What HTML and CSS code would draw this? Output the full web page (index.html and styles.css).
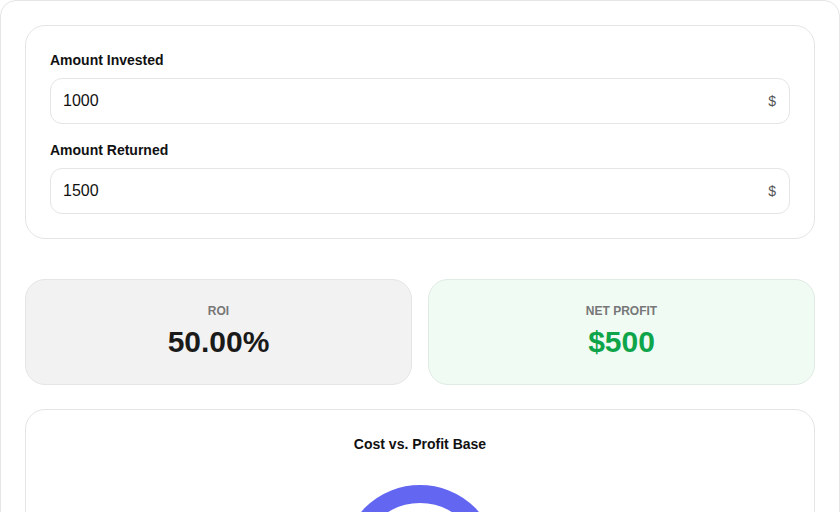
FILE: index.html
```html
<!DOCTYPE html>
<html lang="en">
<head>
<meta charset="utf-8">
<title>ROI Calculator</title>
<link rel="stylesheet" href="styles.css">
</head>
<body>
<div class="app">
  <section class="card inputs">
    <div class="field">
      <label class="label" for="inv">Amount Invested</label>
      <div class="input-wrap">
        <input id="inv" class="input" type="text" value="1000">
        <span class="suffix">$</span>
      </div>
    </div>
    <div class="field">
      <label class="label" for="ret">Amount Returned</label>
      <div class="input-wrap">
        <input id="ret" class="input" type="text" value="1500">
        <span class="suffix">$</span>
      </div>
    </div>
  </section>

  <section class="stats">
    <div class="stat stat-roi">
      <div class="stat-label">ROI</div>
      <div class="stat-value">50.00%</div>
    </div>
    <div class="stat stat-profit">
      <div class="stat-label">NET PROFIT</div>
      <div class="stat-value green">$500</div>
    </div>
  </section>

  <section class="card chart-card">
    <h3 class="chart-title">Cost vs. Profit Base</h3>
    <div class="chart">
      <svg class="donut" width="180" height="180" viewBox="0 0 180 180">
        <circle cx="90" cy="90" r="69" fill="none" stroke="#6366f1" stroke-width="18"/>
        <circle cx="90" cy="90" r="69" fill="none" stroke="#22c55e" stroke-width="18"
          stroke-dasharray="144.5 289" transform="rotate(30 90 90)"/>
      </svg>
    </div>
  </section>
</div>
</body>
</html>
```

FILE: styles.css
```css
* { box-sizing: border-box; }
html, body {
  margin: 0;
  padding: 0;
  background: #ffffff;
}
body {
  font-family: "Liberation Sans", Arial, Helvetica, sans-serif;
  color: #111111;
}
.app {
  border: 1px solid #e5e5e5;
  border-radius: 16px;
  padding: 24px;
  display: flex;
  flex-direction: column;
  background: #ffffff;
  min-height: 700px;
}
.card {
  border: 1px solid #e5e5e5;
  border-radius: 20px;
  padding: 24px;
  background: #ffffff;
}
.inputs {
  display: flex;
  flex-direction: column;
  gap: 16px;
}
.field {
  display: flex;
  flex-direction: column;
  gap: 8px;
}
.label {
  font-size: 14px;
  font-weight: 700;
  line-height: 20px;
  color: #111111;
}
.input-wrap {
  display: flex;
  align-items: center;
  height: 46px;
  border: 1px solid #e5e5e5;
  border-radius: 12px;
  padding: 0 12px;
  background: #ffffff;
}
.input {
  flex: 1;
  border: 0;
  outline: none;
  background: transparent;
  font-family: "Liberation Sans", Arial, Helvetica, sans-serif;
  font-size: 16px;
  color: #111111;
  padding: 0;
  height: 100%;
}
.suffix {
  font-size: 14px;
  color: #555555;
  padding-right: 1px;
}
.stats {
  margin-top: 40px;
  display: grid;
  grid-template-columns: 1fr 1fr;
  gap: 16px;
}
.stat {
  border: 1px solid #e5e5e5;
  border-radius: 20px;
  padding: 24px;
  text-align: center;
  height: 106px;
}
.stat-roi { background: #f2f2f2; }
.stat-profit {
  background: #f0fbf4;
  border-color: #e0ebe4;
}
.stat-label {
  font-size: 12px;
  font-weight: 700;
  line-height: 14px;
  color: #777777;
}
.stat-value {
  margin-top: 6px;
  font-size: 30px;
  font-weight: 700;
  line-height: 36px;
  color: #1a1a1a;
}
.stat-value.green { color: #0ea54a; }
.chart-card {
  margin-top: 24px;
}
.chart-title {
  margin: 0;
  font-size: 14px;
  font-weight: 700;
  line-height: 20px;
  text-align: center;
  color: #111111;
}
.chart {
  display: flex;
  justify-content: center;
  margin-top: 19px;
}
.donut { display: block; }
```
